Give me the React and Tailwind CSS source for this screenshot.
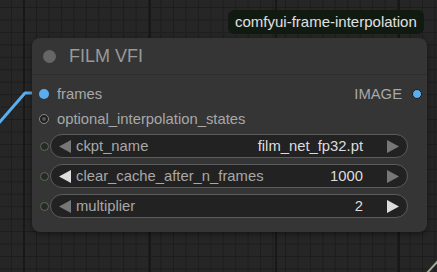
import React from 'react';

const font = { fontFamily: '"Liberation Sans", Arial, sans-serif' };

function Arrow({ dir, lit }) {
  const cls = lit ? 'fill-[#dddddd]' : 'fill-[#777777]';
  return (
    <svg width="12" height="13" viewBox="0 0 12 13" className="shrink-0">
      {dir === 'left'
        ? <polygon points="12,0 12,13 0,6.5" className={cls} />
        : <polygon points="0,0 0,13 12,6.5" className={cls} />}
    </svg>
  );
}

function Widget({ label, value, leftLit, rightLit }) {
  return (
    <div className="relative h-[24px] flex items-center">
      {/* widget input slot */}
      <div className="absolute left-[8px] top-[8px] w-[9px] h-[9px] rounded-full border border-[#5b6b56] bg-[#252a24]" />
      <div className="ml-[18px] mr-[19px] flex-1 h-full rounded-full border border-[#5c5c5c] bg-[#222222] flex items-center pl-[8px] pr-[8px]">
        <Arrow dir="left" lit={leftLit} />
        <span className="ml-[5px] text-[14.8px] text-[#a8a8a8]">{label}</span>
        <span className="ml-auto mr-[24px] text-[14.8px] text-[#dddddd]">{value}</span>
        <Arrow dir="right" lit={rightLit} />
      </div>
    </div>
  );
}

function GridBg() {
  return (
    <svg className="absolute inset-0" width="437" height="272">
      <defs>
        <pattern id="minor" x="-0.4" y="7" width="12.45" height="12.45" patternUnits="userSpaceOnUse">
          <rect width="12.45" height="12.45" fill="#262626" />
          <line x1="12" y1="0" x2="12" y2="12.45" stroke="#1d1d1d" strokeWidth="1" />
          <line x1="0" y1="0.5" x2="12.45" y2="0.5" stroke="#1d1d1d" strokeWidth="1" />
        </pattern>
      </defs>
      <rect width="437" height="272" fill="url(#minor)" />
      {[24, 150, 276, 399].map((x) => (
        <line key={x} x1={x} y1="0" x2={x} y2="272" stroke="#181818" strokeWidth="2" />
      ))}
      {/* incoming link */}
      <polyline points="-2,124 25,93 40,93" fill="none" stroke="#5aaef0" strokeWidth="3" strokeLinejoin="round" />
      {/* link at the bottom right */}
      <line x1="427" y1="273" x2="438" y2="261" stroke="#9aab92" strokeWidth="2" />
    </svg>
  );
}

export default function App() {
  return (
    <div className="relative w-[437px] h-[272px] overflow-hidden bg-[#262626]" style={font}>
      <GridBg />

      {/* source badge */}
      <div className="absolute left-[228px] top-[10px] h-[24px] px-[7px] flex items-center rounded-[6px] bg-[#111a10] text-[15px] text-[#e0e0e0]">
        comfyui-frame-interpolation
      </div>

      {/* node */}
      <div className="absolute left-[32px] top-[38px] w-[395px] h-[194px] rounded-[8px] bg-[#353535] shadow-[0_2px_6px_rgba(0,0,0,0.45)]">
        <div className="h-[37px] border-b border-[#2e2e2e] flex items-center pl-[11px]">
          <div className="w-[13px] h-[13px] rounded-full bg-[#666666]" />
          <span className="ml-[13px] text-[18px] text-[#9a9a9a]">FILM VFI</span>
        </div>

        <div className="pt-[7px]">
          <div className="relative h-[25px] flex items-center">
            <div className="absolute left-[7px] top-[7px] w-[10px] h-[10px] rounded-full bg-[#5aaef0]" />
            <span className="ml-[25px] text-[14.8px] text-[#a8a8a8]">frames</span>
            <span className="ml-auto mr-[25px] text-[14.8px] text-[#a8a8a8]">IMAGE</span>
            <div className="absolute right-[5px] top-[7px] w-[10px] h-[10px] rounded-full bg-[#5aaef0] border border-[#1a1a1a]" />
          </div>
          <div className="relative h-[25px] flex items-center">
            <div className="absolute left-[7px] top-[7px] w-[10px] h-[10px] rounded-full border border-[#8a8a8a] bg-[#1e1e1e] flex items-center justify-center">
              <div className="w-[4px] h-[4px] rounded-full bg-[#555555]" />
            </div>
            <span className="ml-[25px] text-[14.8px] text-[#a8a8a8]">optional_interpolation_states</span>
          </div>
        </div>

        <div className="mt-[2px] flex flex-col gap-[6px]">
          <Widget label="ckpt_name" value="film_net_fp32.pt" />
          <Widget label="clear_cache_after_n_frames" value="1000" leftLit />
          <Widget label="multiplier" value="2" rightLit />
        </div>
      </div>
    </div>
  );
}
